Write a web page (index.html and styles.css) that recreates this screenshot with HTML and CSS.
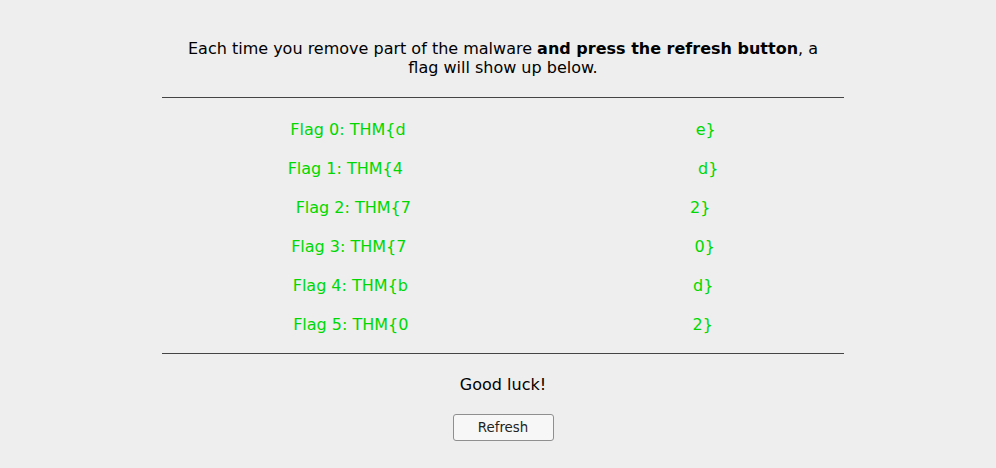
FILE: index.html
```html
<!DOCTYPE html>
<html>
<head>
<meta charset="utf-8">
<link rel="stylesheet" href="styles.css">
</head>
<body>
<main class="page">
  <p class="intro">Each time you remove part of the malware <b>and press the refresh button</b>, a flag will show up below.</p>
  <hr class="rule">
  <div class="flags">
    <div class="flag"><span>Flag 0: THM{d</span><span class="gap r0"></span><span>e}</span></div>
    <div class="flag"><span>Flag 1: THM{4</span><span class="gap r1"></span><span>d}</span></div>
    <div class="flag"><span>Flag 2: THM{7</span><span class="gap r2"></span><span>2}</span></div>
    <div class="flag"><span>Flag 3: THM{7</span><span class="gap r3"></span><span>0}</span></div>
    <div class="flag"><span>Flag 4: THM{b</span><span class="gap r4"></span><span>d}</span></div>
    <div class="flag"><span>Flag 5: THM{0</span><span class="gap r5"></span><span>2}</span></div>
  </div>
  <hr class="rule">
  <p class="luck">Good luck!</p>
  <button class="refresh" type="button">Refresh</button>
</main>
</body>
</html>
```
FILE: styles.css
```css
html, body {
  margin: 0;
  padding: 0;
  background: #eeeeee;
}
body {
  font-family: "DejaVu Sans", sans-serif;
  font-size: 16px;
  color: #000;
}
.page {
  width: 682px;
  margin-left: 162px;
  display: flex;
  flex-direction: column;
  align-items: center;
  padding-top: 39px;
}
.intro {
  margin: 0;
  max-width: 650px;
  text-align: center;
  line-height: 19px;
}
.rule {
  width: 100%;
  margin: 20px 0 0 0;
  border: 0;
  border-top: 1px solid #444;
  height: 0;
}
.flags {
  display: flex;
  flex-direction: column;
  align-items: center;
  gap: 20px;
  padding: 22px 0 19px 0;
}
.flags + .rule {
  margin-top: 0;
}
.flag {
  color: #00d800;
  line-height: 19px;
  white-space: nowrap;
  display: flex;
}
.gap { display: inline-block; }
.r0 { width: 290px; }
.r1 { width: 295px; }
.r2 { width: 279px; }
.r3 { width: 288px; }
.r4 { width: 285px; }
.r5 { width: 284px; }
.luck {
  margin: 21px 0 0 0;
  line-height: 19px;
}
.refresh {
  margin-top: 20px;
  width: 101px;
  height: 27px;
  font-family: "DejaVu Sans", sans-serif;
  font-size: 13.33px;
  color: #222;
  background: #f7f7f7;
  border: 1px solid #8f8f8f;
  border-radius: 3px;
  padding: 0;
}
```
